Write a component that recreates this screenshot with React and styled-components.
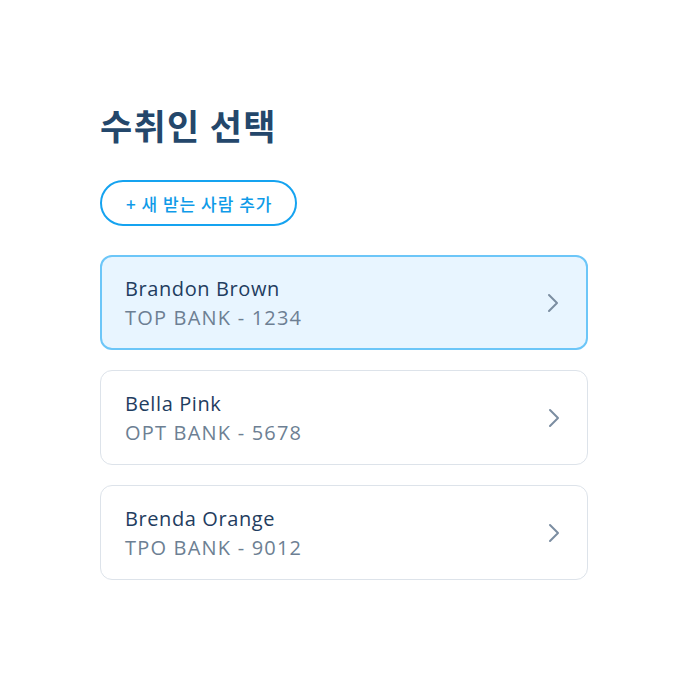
import React, { useState } from 'react';
import styled, { createGlobalStyle } from 'styled-components';

const GlobalStyle = createGlobalStyle`
  body {
    margin: 0;
    background: #ffffff;
    font-family: "Open Sans", "Noto Sans CJK KR", sans-serif;
  }
`;

const Page = styled.div`
  width: 690px;
  height: 690px;
  box-sizing: border-box;
  padding: 96px 102px 0 100px;
  display: flex;
  flex-direction: column;
`;

const Title = styled.h1`
  margin: 0;
  font-family: "Noto Sans CJK KR", sans-serif;
  font-size: 35px;
  font-weight: 700;
  line-height: 58px;
  color: #24476b;
  letter-spacing: 1.3px;
`;

const AddButton = styled.button`
  margin-top: 26px;
  align-self: flex-start;
  height: 46px;
  padding: 0 23px 0 24px;
  border: 2px solid #15a3f0;
  border-radius: 23px;
  background: #ffffff;
  color: #0f9be8;
  font-family: "Noto Sans CJK KR", sans-serif;
  font-size: 17px;
  font-weight: 500;
  letter-spacing: 1px;
  cursor: pointer;
`;

const List = styled.div`
  margin-top: 29px;
  display: flex;
  flex-direction: column;
  gap: 20px;
`;

const Card = styled.div`
  height: 95px;
  box-sizing: border-box;
  display: flex;
  align-items: center;
  justify-content: space-between;
  padding: 0 26px 0 ${p => (p.selected ? 23 : 24)}px;
  border-radius: 12px;
  border: ${p => (p.selected ? '2px solid #6cc6f8' : '1px solid #dde3ea')};
  background: ${p => (p.selected ? '#e8f5ff' : '#ffffff')};
  cursor: pointer;
`;

const Info = styled.div`
  display: flex;
  flex-direction: column;
  gap: 2px;
`;

const Name = styled.div`
  font-size: 20px;
  line-height: 27px;
  letter-spacing: 0.6px;
  color: #1f3d60;
`;

const Account = styled.div`
  font-size: 20px;
  line-height: 27px;
  letter-spacing: 1.2px;
  color: #6d7f93;
`;

const Chevron = () => (
  <svg width="14" height="20" viewBox="0 0 14 20" fill="none">
    <path d="M3 2l8 8-8 8" stroke="#7b8da1" strokeWidth="2" strokeLinecap="round" strokeLinejoin="round" />
  </svg>
);

const recipients = [
  { name: 'Brandon Brown', account: 'TOP BANK - 1234' },
  { name: 'Bella Pink', account: 'OPT BANK - 5678' },
  { name: 'Brenda Orange', account: 'TPO BANK - 9012' },
];

export default function App() {
  const [selected, setSelected] = useState(0);
  return (
    <>
      <GlobalStyle />
      <Page>
        <Title>수취인 선택</Title>
        <AddButton>+ 새 받는 사람 추가</AddButton>
        <List>
          {recipients.map((r, i) => (
            <Card key={r.name} selected={i === selected} onClick={() => setSelected(i)}>
              <Info>
                <Name>{r.name}</Name>
                <Account>{r.account}</Account>
              </Info>
              <Chevron />
            </Card>
          ))}
        </List>
      </Page>
    </>
  );
}
